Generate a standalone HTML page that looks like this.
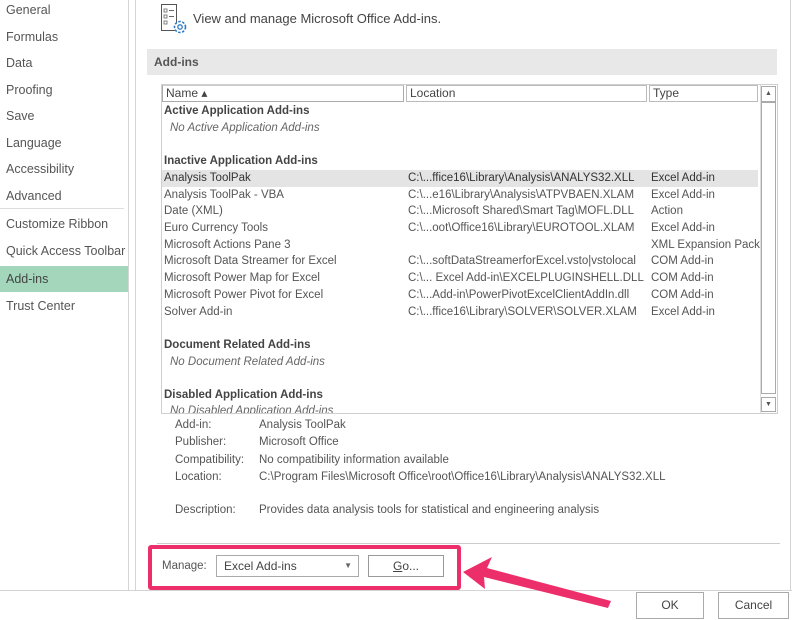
<!DOCTYPE html>
<html><head><meta charset="utf-8"><style>
*{margin:0;padding:0;box-sizing:border-box}
body{width:792px;height:620px;background:#fff;position:relative;overflow:hidden;font-family:"Liberation Sans",sans-serif;color:#444;font-size:12px}
.a{position:absolute;white-space:nowrap}
.side{font-size:12.5px;color:#555;left:6px}
.row{position:absolute;left:162px;width:596px;height:17px;line-height:17px;font-size:11.5px;color:#555;white-space:nowrap}
.row span{position:absolute;white-space:nowrap}
.row .n{left:2px}.row .l{left:246px}.row .t{left:489px}
.bold{font-weight:bold;color:#444}
.it{font-style:italic;color:#666}
.lbl{font-size:11.5px;color:#555}
</style></head><body>
<div class="a side" style="top:3px">General</div>
<div class="a side" style="top:30px">Formulas</div>
<div class="a side" style="top:56px">Data</div>
<div class="a side" style="top:83px">Proofing</div>
<div class="a side" style="top:109px">Save</div>
<div class="a side" style="top:136px">Language</div>
<div class="a side" style="top:162px">Accessibility</div>
<div class="a side" style="top:189px">Advanced</div>
<div class="a" style="left:0;top:208px;width:124px;height:1px;background:#ddd"></div>
<div class="a side" style="top:217px">Customize Ribbon</div>
<div class="a side" style="top:244px">Quick Access Toolbar</div>
<div class="a" style="left:0;top:266px;width:128px;height:26px;background:#a3d6bb"></div>
<div class="a side" style="top:272px;color:#444">Add-ins</div>
<div class="a side" style="top:299px">Trust Center</div>
<div class="a" style="left:128px;top:0;width:1px;height:590px;background:#d4d4d4"></div>
<div class="a" style="left:135px;top:0;width:1px;height:590px;background:#d4d4d4"></div>
<div class="a" style="left:790px;top:0;width:1px;height:590px;background:#d4d4d4"></div>
<div class="a" style="left:0;top:590px;width:792px;height:1px;background:#d4d4d4"></div>
<svg class="a" style="left:160px;top:3px" width="28" height="32" viewBox="0 0 28 32">
<rect x="1.5" y="1.5" width="15" height="26" fill="#fff" stroke="#555"/>
<rect x="4" y="6" width="3" height="3" fill="none" stroke="#666" stroke-width=".8"/><line x1="9" y1="7.5" x2="14" y2="7.5" stroke="#666"/>
<rect x="4" y="12" width="3" height="3" fill="none" stroke="#666" stroke-width=".8"/><line x1="9" y1="13.5" x2="14" y2="13.5" stroke="#666"/>
<rect x="4" y="18" width="3" height="3" fill="none" stroke="#666" stroke-width=".8"/>
<circle cx="20" cy="24" r="5.5" fill="#fff" stroke="#2e7cc4" stroke-width="1.6" stroke-dasharray="2.5 1.5"/>
<circle cx="20" cy="24" r="2.2" fill="none" stroke="#2e7cc4" stroke-width="1.3"/>
</svg>
<div class="a" style="left:193px;top:11px;font-size:13px;color:#444">View and manage Microsoft Office Add-ins.</div>
<div class="a" style="left:147px;top:49px;width:630px;height:26px;background:#e8e8e8"></div>
<div class="a" style="left:154px;top:55px;font-weight:bold;font-size:12px;color:#555">Add-ins</div>
<div class="a" style="left:161px;top:84px;width:617px;height:330px;border:1px solid #cfcfcf"></div>
<div class="a" style="left:162px;top:85px;width:242px;height:17px;border:1px solid #aaa;border-top-color:#ccc;font-size:12px;padding-left:3px;line-height:15px">Name ▴</div>
<div class="a" style="left:406px;top:85px;width:241px;height:17px;border:1px solid #bbb;font-size:12px;padding-left:3px;line-height:15px">Location</div>
<div class="a" style="left:649px;top:85px;width:109px;height:17px;border:1px solid #bbb;font-size:12px;padding-left:3px;line-height:15px">Type</div>
<div class="a" style="left:760px;top:85px;width:17px;height:328px;border-left:1px solid #ddd;background:#fff"></div>
<div class="a" style="left:761px;top:86px;width:15px;height:16px;border:1px solid #aaa;font-size:7px;text-align:center;line-height:14px;color:#555">▲</div>
<div class="a" style="left:761px;top:102px;width:15px;height:292px;border:1px solid #aaa"></div>
<div class="a" style="left:761px;top:397px;width:15px;height:15px;border:1px solid #aaa;font-size:7px;text-align:center;line-height:13px;color:#555">▼</div>
<div class="row bold" style="top:103px"><span class="n">Active Application Add-ins</span></div>
<div class="row it" style="top:120px"><span class="n" style="left:8px">No Active Application Add-ins</span></div>
<div class="row bold" style="top:153px"><span class="n">Inactive Application Add-ins</span></div>
<div class="row" style="top:170px;background:#e4e4e4;color:#333"><span class="n">Analysis ToolPak</span><span class="l">C:\...ffice16\Library\Analysis\ANALYS32.XLL</span><span class="t">Excel Add-in</span></div>
<div class="row" style="top:187px"><span class="n">Analysis ToolPak - VBA</span><span class="l">C:\...e16\Library\Analysis\ATPVBAEN.XLAM</span><span class="t">Excel Add-in</span></div>
<div class="row" style="top:203px"><span class="n">Date (XML)</span><span class="l">C:\...Microsoft Shared\Smart Tag\MOFL.DLL</span><span class="t">Action</span></div>
<div class="row" style="top:220px"><span class="n">Euro Currency Tools</span><span class="l">C:\...oot\Office16\Library\EUROTOOL.XLAM</span><span class="t">Excel Add-in</span></div>
<div class="row" style="top:237px"><span class="n">Microsoft Actions Pane 3</span><span class="t">XML Expansion Pack</span></div>
<div class="row" style="top:253px"><span class="n">Microsoft Data Streamer for Excel</span><span class="l">C:\...softDataStreamerforExcel.vsto|vstolocal</span><span class="t">COM Add-in</span></div>
<div class="row" style="top:270px"><span class="n">Microsoft Power Map for Excel</span><span class="l">C:\... Excel Add-in\EXCELPLUGINSHELL.DLL</span><span class="t">COM Add-in</span></div>
<div class="row" style="top:287px"><span class="n">Microsoft Power Pivot for Excel</span><span class="l">C:\...Add-in\PowerPivotExcelClientAddIn.dll</span><span class="t">COM Add-in</span></div>
<div class="row" style="top:304px"><span class="n">Solver Add-in</span><span class="l">C:\...ffice16\Library\SOLVER\SOLVER.XLAM</span><span class="t">Excel Add-in</span></div>
<div class="row bold" style="top:337px"><span class="n">Document Related Add-ins</span></div>
<div class="row it" style="top:354px"><span class="n" style="left:8px">No Document Related Add-ins</span></div>
<div class="row bold" style="top:387px"><span class="n">Disabled Application Add-ins</span></div>
<div class="row it" style="top:403px;height:10px;overflow:hidden"><span class="n" style="left:8px">No Disabled Application Add-ins</span></div>
<div class="a lbl" style="left:175px;top:419px">Add-in:</div><div class="a lbl" style="left:259px;top:419px">Analysis ToolPak</div>
<div class="a lbl" style="left:175px;top:436px">Publisher:</div><div class="a lbl" style="left:259px;top:436px">Microsoft Office</div>
<div class="a lbl" style="left:175px;top:454px">Compatibility:</div><div class="a lbl" style="left:259px;top:454px">No compatibility information available</div>
<div class="a lbl" style="left:175px;top:471px">Location:</div><div class="a lbl" style="left:259px;top:471px">C:\Program Files\Microsoft Office\root\Office16\Library\Analysis\ANALYS32.XLL</div>
<div class="a lbl" style="left:175px;top:504px">Description:</div><div class="a lbl" style="left:259px;top:504px">Provides data analysis tools for statistical and engineering analysis</div>
<div class="a" style="left:157px;top:543px;width:623px;height:1px;background:#ccc"></div>
<div class="a" style="left:148px;top:545px;width:313px;height:45px;border:4px solid #ec2f6b;border-radius:3px"></div>
<div class="a lbl" style="left:162px;top:560px">Manage:</div>
<div class="a" style="left:216px;top:555px;width:143px;height:22px;border:1px solid #aaa;font-size:12px;padding-left:7px;line-height:20px;color:#444">Excel Add-ins<span style="position:absolute;right:6px;font-size:8px;color:#666">▼</span></div>
<div class="a" style="left:368px;top:555px;width:76px;height:22px;border:1px solid #999;font-size:12px;text-align:center;line-height:20px;color:#444"><u>G</u>o...</div>
<svg class="a" style="left:455px;top:555px" width="170" height="60" viewBox="0 0 170 60">
<polygon points="8,17 37,2 32,13 156,46 153,53 29,22 30,34" fill="#ec2f6b"/>
</svg>
<div class="a" style="left:636px;top:592px;width:68px;height:27px;border:1px solid #aaa;text-align:center;line-height:25px;font-size:12px;color:#444">OK</div>
<div class="a" style="left:718px;top:592px;width:71px;height:27px;border:1px solid #aaa;text-align:center;line-height:25px;font-size:12px;color:#444">Cancel</div>
</body></html>
